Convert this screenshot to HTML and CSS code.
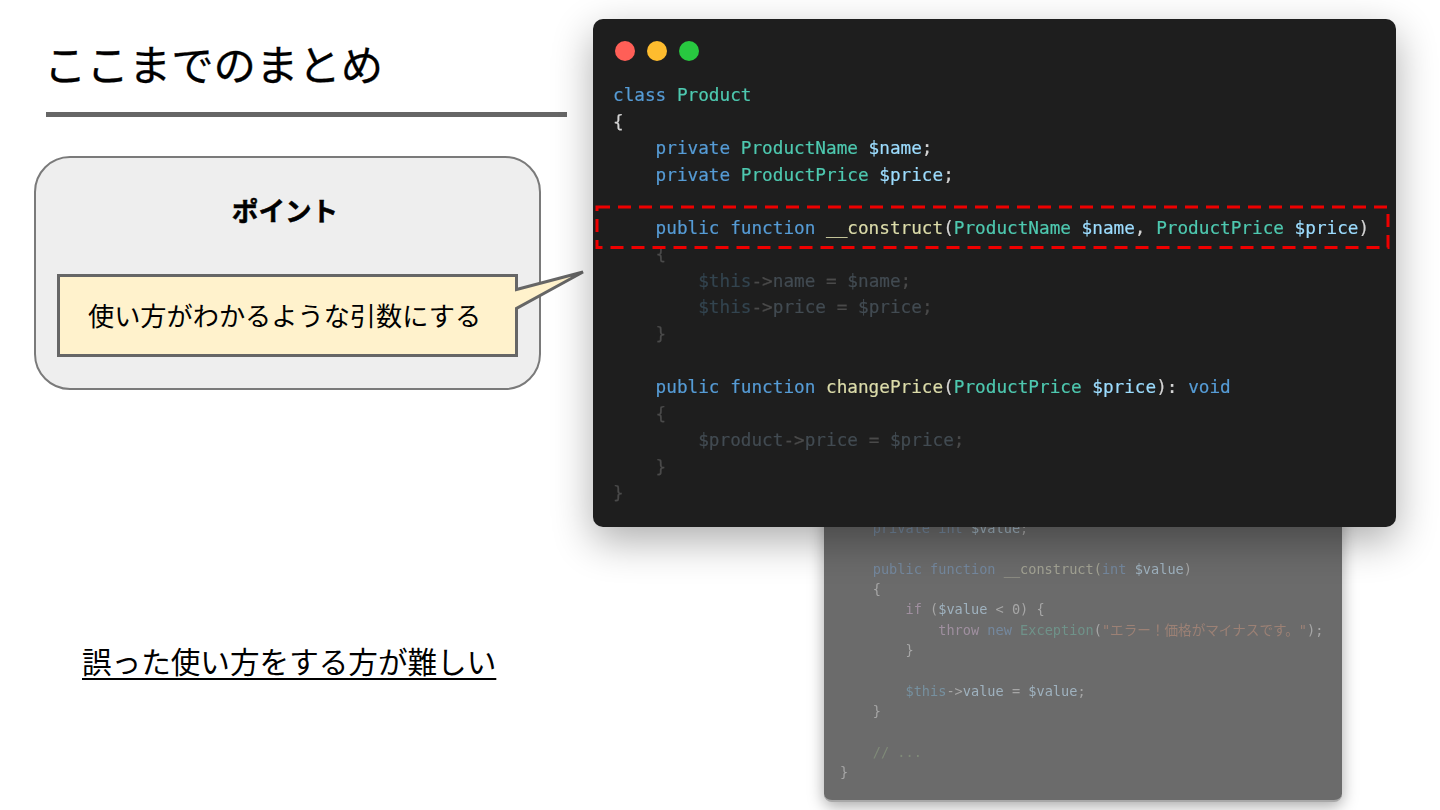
FILE: index.html
```html
<!DOCTYPE html>
<html lang="ja">
<head>
<meta charset="utf-8">
<title>ここまでのまとめ</title>
<link rel="stylesheet" href="styles.css">
</head>
<body>
<main class="slide">
  <header class="heading">
    <h1 class="title">ここまでのまとめ</h1>
  </header>

  <section class="point-box">
    <h2 class="point-title">ポイント</h2>
  </section>

  <div class="callout">
    <svg class="callout-shape" width="530" height="90" viewBox="0 0 530 90" aria-hidden="true">
      <path d="M1.5 6.5H459.5V20.5L526 3L459.5 39.5V86.5H1.5Z" fill="#fff2cc" stroke="#666666" stroke-width="3"/>
    </svg>
    <p class="callout-text">使い方がわかるような引数にする</p>
  </div>

  <p class="note">誤った使い方をする方が難しい</p>

  <div class="code-back">
<pre class="back-code">    <span class="b-kw">private int</span> <span class="b-var">$value</span><span class="b-p">;</span>

    <span class="b-kw">public function</span> <span class="b-fn">__construct(</span><span class="b-kw">int</span> <span class="b-var">$value</span><span class="b-p">)</span>
    <span class="b-p">{</span>
        <span class="b-ctl">if</span> <span class="b-p">(</span><span class="b-var">$value</span> <span class="b-p">&lt; 0) {</span>
            <span class="b-ctl">throw</span> <span class="b-kw">new</span> <span class="b-type">Exception</span><span class="b-p">(</span><span class="b-str">"エラー！価格がマイナスです。"</span><span class="b-p">);</span>
        <span class="b-p">}</span>

        <span class="b-this">$this</span><span class="b-p">-&gt;</span><span class="b-var">value</span> <span class="b-p">=</span> <span class="b-var">$value</span><span class="b-p">;</span>
    <span class="b-p">}</span>

    <span class="b-com">// ...</span>
<span class="b-p">}</span></pre>
  </div>

  <div class="code-window">
    <div class="dots">
      <span class="dot dot-red"></span>
      <span class="dot dot-yellow"></span>
      <span class="dot dot-green"></span>
    </div>
<pre class="code"><span class="kw">class</span> <span class="type">Product</span>
<span class="p">{</span>
    <span class="kw">private</span> <span class="type">ProductName</span> <span class="var">$name</span><span class="p">;</span>
    <span class="kw">private</span> <span class="type">ProductPrice</span> <span class="var">$price</span><span class="p">;</span>

    <span class="kw">public function</span> <span class="fn">__construct</span><span class="p">(</span><span class="type">ProductName</span> <span class="var">$name</span><span class="p">,</span> <span class="type">ProductPrice</span> <span class="var">$price</span><span class="p">)</span>
    <span class="dim">{</span>
        <span class="dim-this">$this</span><span class="dim">-&gt;</span><span class="dim-var">name</span> <span class="dim">=</span> <span class="dim-var">$name</span><span class="dim">;</span>
        <span class="dim-this">$this</span><span class="dim">-&gt;</span><span class="dim-var">price</span> <span class="dim">=</span> <span class="dim-var">$price</span><span class="dim">;</span>
    <span class="dim">}</span>

    <span class="kw">public function</span> <span class="fn">changePrice</span><span class="p">(</span><span class="type">ProductPrice</span> <span class="var">$price</span><span class="p">):</span> <span class="kw">void</span>
    <span class="dim">{</span>
        <span class="dim-var">$product</span><span class="dim">-&gt;</span><span class="dim-var">price</span> <span class="dim">=</span> <span class="dim-var">$price</span><span class="dim">;</span>
    <span class="dim">}</span>
<span class="dim">}</span></pre>
    <svg class="highlight" width="796" height="46" viewBox="0 0 796 46" aria-hidden="true">
      <rect x="2" y="2" width="791" height="40.5" fill="none" stroke="#ee0000" stroke-width="3" stroke-dasharray="13 8"/>
    </svg>
  </div>
</main>
</body>
</html>
```
FILE: styles.css
```css
* {
  box-sizing: border-box;
}

html,
body {
  margin: 0;
  padding: 0;
  background: #ffffff;
}

.slide {
  position: relative;
  width: 1440px;
  height: 810px;
  overflow: hidden;
  background: #ffffff;
  color: #000000;
  font-family: "Noto Sans CJK JP", "Liberation Sans", sans-serif;
}

.heading {
  position: absolute;
  left: 46px;
  top: 34px;
  width: 521px;
  height: 83px;
  border-bottom: 5px solid #666666;
}

.title {
  margin: 0 0 0 -2px;
  font-size: 42.4px;
  font-weight: 400;
  line-height: 58px;
  -webkit-text-stroke: 0.3px #000000;
}

.point-box {
  position: absolute;
  left: 34px;
  top: 156px;
  width: 507px;
  height: 234px;
  padding: 32px 5px 0 0;
  background: #eeeeee;
  border: 2px solid #7a7a7a;
  border-radius: 36px;
}

.point-title {
  margin: 0;
  text-align: center;
  font-size: 26.6px;
  font-weight: 700;
  line-height: 40px;
  color: #000000;
  -webkit-text-stroke: 0.5px #000000;
}

.callout {
  position: absolute;
  left: 57px;
  top: 269px;
  width: 530px;
  height: 90px;
}

.callout-shape {
  position: absolute;
  left: 0;
  top: 0;
}

.callout-text {
  position: relative;
  margin: 0;
  padding: 27px 0 0 31px;
  font-size: 26.2px;
  line-height: 38px;
  white-space: nowrap;
}

.note {
  position: absolute;
  left: 82px;
  top: 640px;
  margin: 0;
  font-size: 29.6px;
  line-height: 42px;
  text-decoration: underline;
  text-decoration-thickness: 2px;
  text-underline-offset: 5px;
  white-space: nowrap;
}

.code-back {
  position: absolute;
  left: 824px;
  top: 500px;
  width: 518px;
  height: 302px;
  padding: 18px 0 0 16px;
  background: #6b6b6b;
  border-bottom: 2px solid #a8a8a8;
  border-radius: 0 0 8px 8px;
  box-shadow: 0 4px 16px rgba(0, 0, 0, 0.35);
}

.back-code {
  margin: 0;
  font-family: "DejaVu Sans Mono", "Noto Sans CJK JP", monospace;
  font-size: 13.6px;
  line-height: 20.35px;
  filter: blur(0.4px);
}

.b-kw { color: #74889e; }
.b-var { color: #9fb2bf; }
.b-p { color: #a6a6a6; }
.b-fn { color: #a3a394; }
.b-ctl { color: #9f8f9f; }
.b-type { color: #6f9289; }
.b-str { color: #9c8175; }
.b-this { color: #76909f; }
.b-com { color: #7f8a78; }

.code-window {
  position: absolute;
  left: 593px;
  top: 19px;
  width: 803px;
  height: 508px;
  padding: 22px 0 0 20px;
  background: #1e1e1e;
  border-radius: 10px;
  box-shadow: 0 14px 40px rgba(0, 0, 0, 0.32);
}

.dots {
  display: flex;
  gap: 12px;
  margin-left: 2px;
}

.dot {
  width: 20px;
  height: 20px;
  border-radius: 50%;
}

.dot-red { background: #ff5f57; }
.dot-yellow { background: #febc2e; }
.dot-green { background: #28c840; }

.code {
  margin: 21px 0 0 0;
  font-family: "DejaVu Sans Mono", monospace;
  font-size: 17.7px;
  line-height: 26.55px;
  color: #d4d4d4;
  filter: blur(0.3px);
  -webkit-text-stroke: 0.2px currentColor;
}

.kw { color: #569cd6; }
.type { color: #4ec9b0; }
.var { color: #9cdcfe; }
.fn { color: #dcdcaa; }
.p { color: #d4d4d4; }
.dim { color: #4a4a4a; }
.dim-var { color: #424b52; }
.dim-this { color: #33444f; }

.highlight {
  position: absolute;
  left: 2px;
  top: 186px;
}
```
